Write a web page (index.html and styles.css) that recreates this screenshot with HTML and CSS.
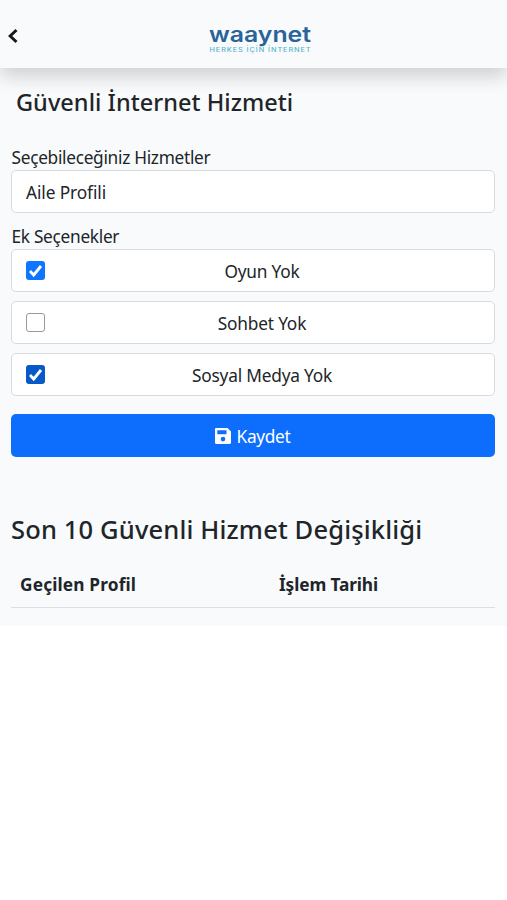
FILE: index.html
```html
<!DOCTYPE html>
<html lang="tr">
<head>
<meta charset="utf-8">
<title>Güvenli İnternet Hizmeti</title>
<link rel="stylesheet" href="styles.css">
</head>
<body>
<div class="page">
  <header class="topbar">
    <svg class="back" viewBox="0 0 12 18"><path d="M9.500 3 3.200 9l6.300 6"/></svg>
    <svg class="logo" viewBox="0 0 104 32">
      <text class="logo-name" transform="translate(0 19.500) scale(1.150 1)" x="0" y="0" textLength="88.700" lengthAdjust="spacingAndGlyphs">waaynet</text>
      <text class="logo-tag" x="0.500" y="30" textLength="102" lengthAdjust="spacingAndGlyphs">HERKES İÇİN İNTERNET</text>
    </svg>
  </header>
  <main>
    <h1>Güvenli İnternet Hizmeti</h1>
    <div class="label services">Seçebileceğiniz Hizmetler</div>
    <div class="field profile">Aile Profili</div>
    <div class="label extras">Ek Seçenekler</div>
    <label class="field option"><span class="check on"><svg viewBox="0 0 19 19"><path d="m4 10 3.700 4L15 5"/></svg></span><span class="text">Oyun Yok</span></label>
    <label class="field option"><span class="check"></span><span class="text">Sohbet Yok</span></label>
    <label class="field option"><span class="check on dark"><svg viewBox="0 0 19 19"><path d="m4 10 3.700 4L15 5"/></svg></span><span class="text">Sosyal Medya Yok</span></label>
    <button class="save"><svg viewBox="0 0 16 16"><path fill-rule="evenodd" d="M1.200 0h11.300L16 3.500v11.300c0 .7-.5 1.200-1.200 1.200H1.200C.5 16 0 15.500 0 14.800V1.200C0 .5.5 0 1.200 0ZM2.300 2.300v4h9.200v-4ZM8 8.800a2.300 2.300 0 1 0 0 4.600 2.300 2.300 0 0 0 0-4.600Z"/></svg><span>Kaydet</span></button>
    <h2>Son 10 Güvenli Hizmet Değişikliği</h2>
    <div class="table-head"><span class="col1">Geçilen Profil</span><span class="col2">İşlem Tarihi</span></div>
  </main>
</div>
</body>
</html>
```
FILE: styles.css
```css
* { box-sizing: border-box; }
body {
  margin: 0;
  background: #fff;
  color: #212529;
  font: 17.3px/27px "Noto Sans", "Open Sans", sans-serif;
}
.page { height: 626px; background: #f8fafc; }
.topbar {
  display: grid;
  grid-template-columns: 1fr 104px 1fr;
  align-items: center;
  height: 68px;
  padding-left: 14px;
  background: #f8fafc;
  box-shadow: 0 9px 17px rgba(0, 0, 0, .16);
}
.back { width: 12px; height: 18px; margin: 3px 0 0 -7px; fill: none; stroke: #17191c; stroke-width: 3; }
.logo { width: 104px; height: 32px; margin-top: 7px; overflow: visible; }
.logo-name { font: 600 21.5px "Inter", sans-serif; fill: #28639a; }
.logo-tag { font: 500 5.5px "Inter", sans-serif; letter-spacing: .7px; fill: #55b4cc; }
main { padding: 0 12px 0 11px; }
h1, h2 { margin: 0; font-weight: 500; }
h1 { padding: 18px 0 0 5px; font-size: 23.5px; line-height: 32px; letter-spacing: .04px; }
.label { height: 27px; padding-left: .5px; white-space: nowrap; letter-spacing: -.3px; }
.services { margin-top: 26px; }
.extras { margin-top: 10px; }
.field {
  display: flex;
  align-items: center;
  height: 43px;
  margin-top: -1px;
  padding: 0 14px;
  background: #fff;
  border: 1px solid #d7dbde;
  border-radius: 5px;
}
.option + .option { margin-top: 9px; }
.check { width: 19px; height: 19px; border: 1.5px solid #999; border-radius: 3px; }
.check.on { border: 0; background: #0d75ff; }
.check.dark { background: #0759c8; }
.check svg { display: block; fill: none; stroke: #fff; stroke-width: 2.8; }
.text { flex: 1; padding: 2px 1px 0 0; text-align: center; letter-spacing: -.2px; }
.profile { padding-top: 1px; letter-spacing: -.1px; }
.save {
  display: flex;
  align-items: center;
  justify-content: center;
  gap: 5px;
  width: 100%;
  height: 43px;
  margin-top: 18px;
  padding: 1px 0 0;
  border: 0;
  border-radius: 5px;
  background: #0d6efd;
  color: #fff;
  font: inherit;
  letter-spacing: -.3px;
}
.save svg { width: 16px; height: 16px; fill: #fff; }
h2 { margin-top: 54px; font-size: 25.5px; line-height: 36px; white-space: nowrap; letter-spacing: .15px; }
.table-head {
  display: grid;
  grid-template-columns: 259px 1fr;
  align-items: center;
  height: 47px;
  margin-top: 14px;
  padding: 1px 0 0 9px;
  border-bottom: 1px solid #dbdfe2;
  font-weight: 700;
  white-space: nowrap;
}
.col1 { letter-spacing: .15px; }
.col2 { letter-spacing: -.12px; }
```
